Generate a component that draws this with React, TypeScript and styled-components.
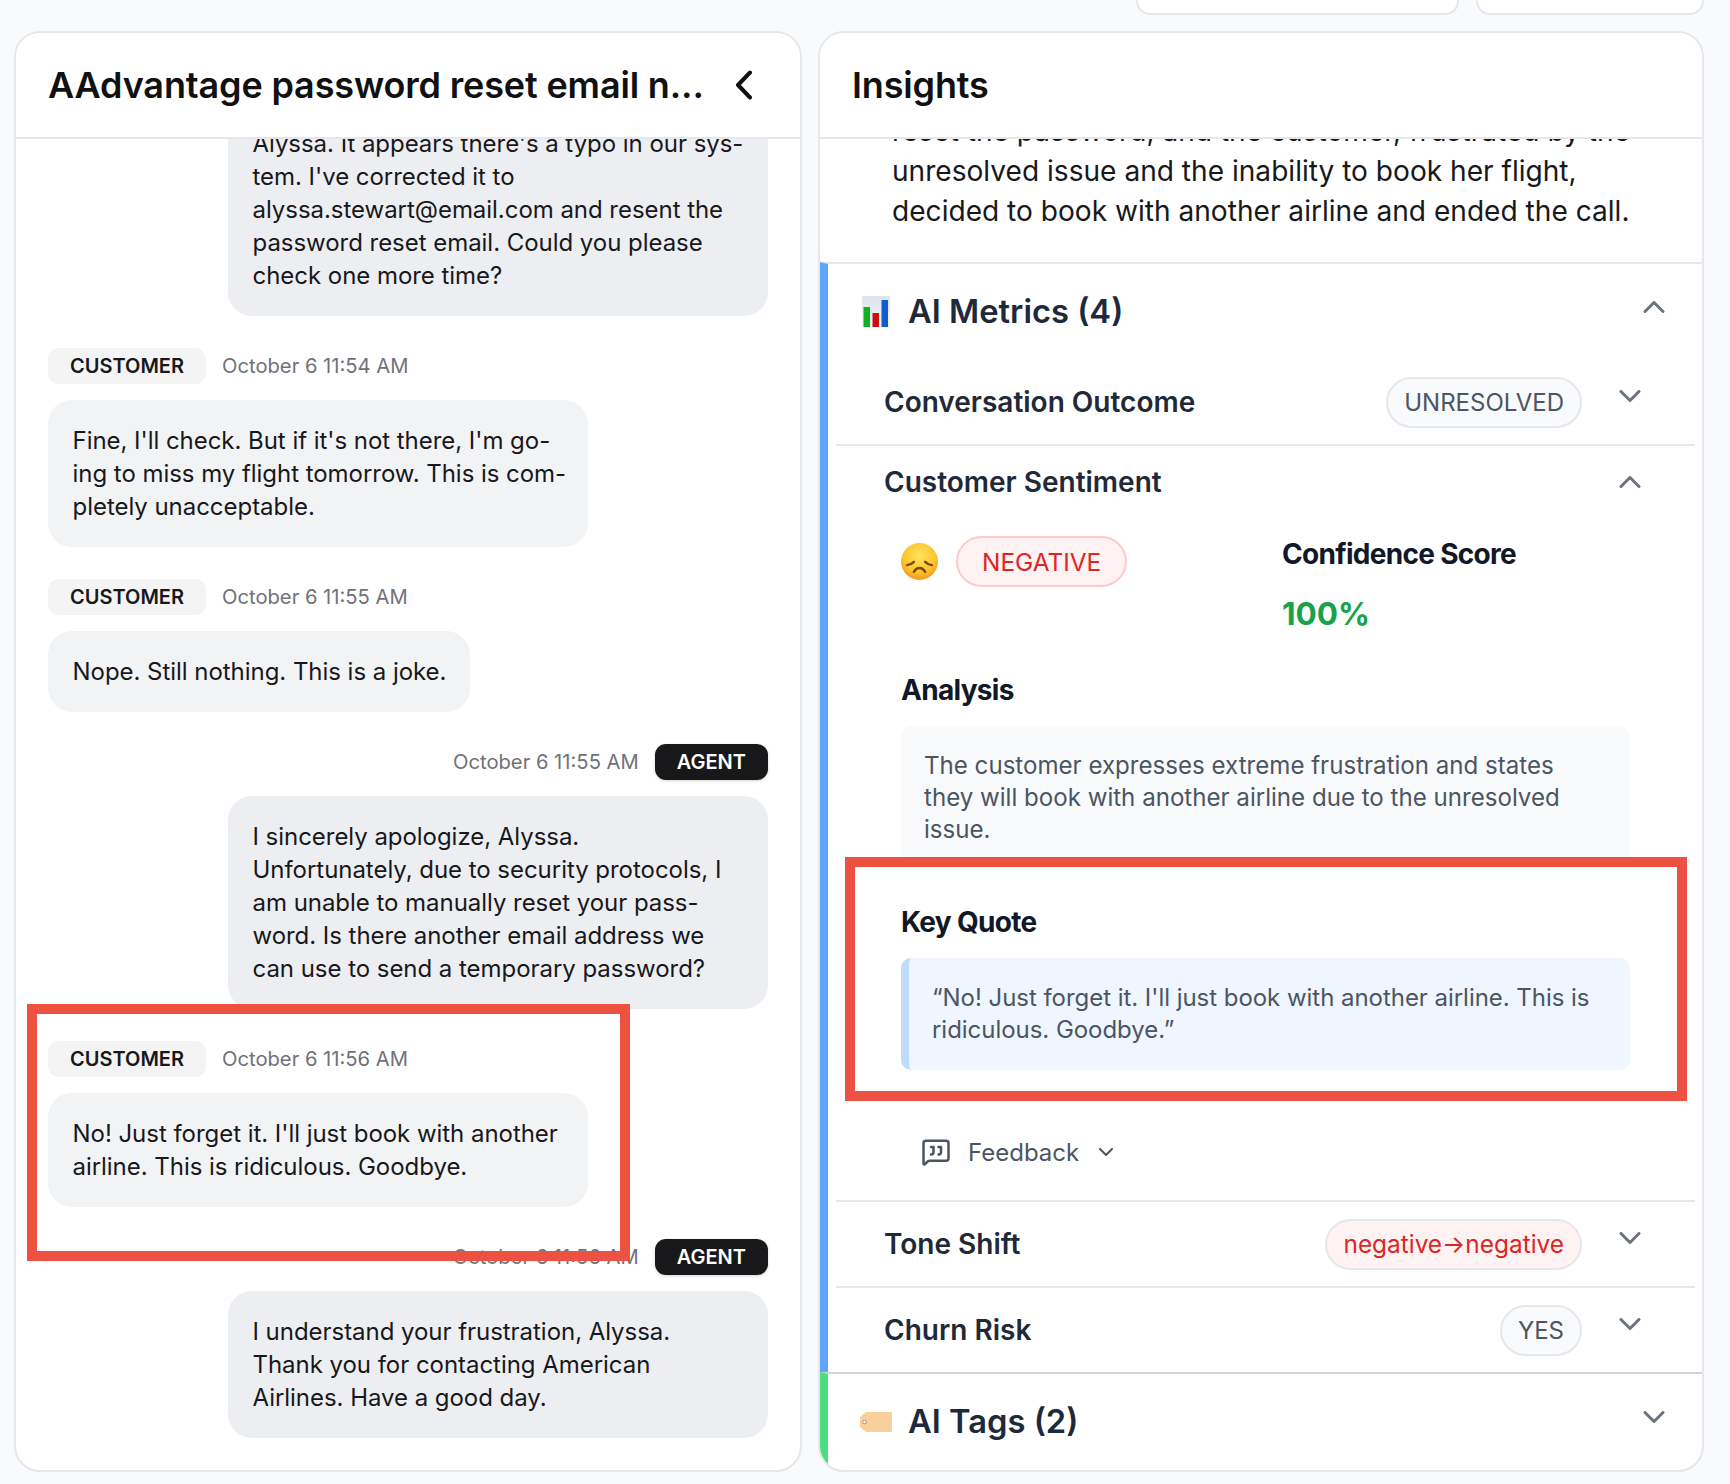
import React from "react";
import styled, { createGlobalStyle } from "styled-components";
import { MessageSquareQuote } from "lucide-react";

const Global = createGlobalStyle`
  html, body { margin: 0; padding: 0; background: #f9fafb; }
  body { font-family: Inter, "Liberation Sans", sans-serif; -webkit-font-smoothing: antialiased; }
  * { box-sizing: border-box; }
`;

const Page = styled.div`
  position: relative;
  width: 1730px;
  height: 1484px;
  overflow: hidden;
  background: #f9fafb;
  padding: 0 26px 12px 14px;
  display: flex;
  flex-direction: column;
`;

const TopStubs = styled.div`
  display: flex;
  justify-content: flex-end;
  gap: 17px;
  height: 15px;
  margin-bottom: 16px;
`;

const Stub = styled.div<{ $w: number }>`
  width: ${(p) => p.$w}px;
  background: #fff;
  border: 2px solid #e5e7eb;
  border-top: none;
  border-radius: 0 0 14px 14px;
`;

const Columns = styled.div`
  flex: 1;
  min-height: 0;
  display: grid;
  grid-template-columns: 788px 886px;
  gap: 16px;
`;

const Panel = styled.section`
  display: flex;
  flex-direction: column;
  min-height: 0;
  background: #fff;
  border: 2px solid #e5e7eb;
  border-radius: 26px;
  overflow: hidden;
`;

const PanelHeader = styled.header`
  flex: none;
  height: 106px;
  display: flex;
  align-items: center;
  justify-content: space-between;
  padding: 0 46px 0 32px;
  border-bottom: 2px solid #e5e7eb;
  background: #fff;
  position: relative;
  z-index: 1;
`;

const PanelTitle = styled.h1`
  margin: 0 0 1px;
  font-size: 36px;
  line-height: 44px;
  font-weight: 600;
  letter-spacing: -0.15px;
  color: #111;
  white-space: nowrap;
`;

const Messages = styled.div`
  flex: 1;
  min-height: 0;
  overflow: hidden;
  display: flex;
  flex-direction: column;
  justify-content: flex-end;
  gap: 32px;
  padding: 0 32px 32px;
`;

const Message = styled.article<{ $agent?: boolean }>`
  flex: none;
  display: flex;
  flex-direction: column;
  gap: 16px;
  align-items: ${(p) => (p.$agent ? "flex-end" : "flex-start")};
`;

const Meta = styled.div`
  display: flex;
  align-items: center;
  gap: 16px;
  height: 36px;
`;

const RoleTag = styled.span<{ $agent?: boolean }>`
  height: 36px;
  display: inline-flex;
  align-items: center;
  padding: 0 22px;
  border-radius: 11px;
  font-size: 20px;
  font-weight: 600;
  color: ${(p) => (p.$agent ? "#fff" : "#18181b")};
  background: ${(p) => (p.$agent ? "#18181b" : "#f4f4f5")};
  box-shadow: ${(p) => (p.$agent ? "0 1px 3px rgba(0,0,0,.18)" : "none")};
`;

const Time = styled.span`
  font-size: 20.2px;
  line-height: 24px;
  margin-bottom: 1px;
  color: #71717a;
`;

const Bubble = styled.div<{ $agent?: boolean; $wide?: boolean }>`
  ${(p) => (p.$wide ? "width: 540px;" : "")}
  padding: 24px 24px 24px 24.5px;
  border-radius: 24px;
  background: ${(p) => (p.$agent ? "#edeef2" : "#f2f3f5")};
  color: #18181b;
  font-size: 24px;
  letter-spacing: -0.04px;
  line-height: 33px;
  white-space: nowrap;
`;

const InsightsBody = styled.div`
  flex: 1;
  min-height: 0;
  overflow: hidden;
  display: flex;
  flex-direction: column;
  justify-content: flex-end;
`;

const Summary = styled.p`
  flex: none;
  margin: 0;
  padding: 0 32px 31px 72px;
  font-size: 28.1px;
  line-height: 40px;
  color: #18181b;
  white-space: nowrap;
`;

const Section = styled.div<{ $accent: string; $line: string }>`
  flex: none;
  border-top: 2px solid ${(p) => p.$line};
  border-left: 8px solid ${(p) => p.$accent};
`;

const SectionHead = styled.div<{ $h: number }>`
  height: ${(p) => p.$h}px;
  display: flex;
  align-items: center;
  padding: 0 37px 0 34px;
`;

const IconSlot = styled.span`
  flex: none;
  width: 28px;
  display: flex;
  justify-content: center;
`;

const SectionTitle = styled.h2`
  flex: 1;
  margin: 0 0 2px 18px;
  font-size: 32.7px;
  line-height: 44px;
  font-weight: 600;
  color: #1e293b;
`;

const HeadChevron = styled.span`
  display: flex;
  margin-top: -10px;
`;

const MetricList = styled.div`
  margin: 0 7px 0 8px;
`;

const Row = styled.div<{ $h?: number; $last?: boolean }>`
  height: ${(p) => p.$h ?? 86}px;
  display: flex;
  align-items: center;
  padding: 0 54px 0 48px;
  border-bottom: ${(p) => (p.$last ? "none" : "2px solid #e5e7eb")};
`;

const RowTitle = styled.h3`
  flex: 1;
  margin: 0;
  font-size: 28px;
  line-height: 40px;
  font-weight: 600;
  color: #1f2937;
`;

const Pill = styled.span<{ $danger?: boolean; $softLine?: boolean; $pad?: number }>`
  height: 51px;
  display: inline-flex;
  align-items: center;
  padding: 0 ${(p) => p.$pad ?? 16}px;
  border-radius: 26px;
  font-size: ${(p) => (p.$danger ? 24.4 : 24)}px;
  white-space: nowrap;
  color: ${(p) => (p.$danger ? "#dc2626" : "#4b5563")};
  background: ${(p) => (p.$danger ? "#fef2f2" : "#f9fafb")};
  border: 2px solid ${(p) => (p.$softLine ? "#fecaca" : "#e5e7eb")};
`;

const RowChevron = styled.span<{ $lift?: number }>`
  display: flex;
  margin-left: 37px;
  margin-top: ${(p) => p.$lift ?? 0}px;
`;

const ChevronSvg = styled.svg`
  display: block;
  fill: none;
  stroke: #6b7280;
  stroke-width: 3;
  stroke-linecap: round;
  stroke-linejoin: round;
`;

const Chevron = ({ up }: { up?: boolean }) => (
  <ChevronSvg width="22" height="12" viewBox="0 0 22 12">
    <path d={up ? "M2 10.5 11 1.5 20 10.5" : "M2 1.5 11 10.5 20 1.5"} />
  </ChevronSvg>
);

const SentimentBody = styled.div`
  padding: 19px 65px 0 65px;
`;

const TopGrid = styled.div`
  display: grid;
  grid-template-columns: 381px 1fr;
  height: 100px;
`;

const SentimentLead = styled.div`
  display: flex;
  align-items: center;
  align-self: start;
  gap: 18px;
`;

const Score = styled.div`
  display: flex;
  flex-direction: column;
  gap: 20px;
`;

const BlockTitle = styled.h4`
  margin: 0;
  font-size: 28px;
  line-height: 36px;
  font-weight: 700;
  letter-spacing: -0.7px;
  color: #111827;
`;

const ScoreValue = styled.div`
  font-size: 31.5px;
  line-height: 44px;
  font-weight: 700;
  color: #16a34a;
`;

const Block = styled.div<{ $gap: number }>`
  display: flex;
  flex-direction: column;
  gap: 18px;
  margin-top: ${(p) => p.$gap}px;
`;

const Analysis = styled.div`
  height: 141px;
  padding: 24px 23px 0;
  border-radius: 10px;
  background: #f9fafb;
  color: #4b5563;
  font-size: 24.1px;
  line-height: 32px;
  white-space: nowrap;
`;

const Quote = styled.blockquote`
  margin: 0;
  height: 112px;
  padding: 24px 24px 24px 23px;
  border-left: 8px solid #bfdbfe;
  border-radius: 10px;
  background: #eff6ff;
  color: #4b5563;
  font-size: 24px;
  letter-spacing: -0.04px;
  line-height: 32px;
  white-space: nowrap;
`;

const FeedbackBar = styled.div`
  height: 130px;
  display: flex;
  align-items: center;
  color: #4b5563;
  padding: 34px 0 0 20px;
  font-size: 24px;
  gap: 17px;
`;

const SmallChevron = styled.svg`
  fill: none;
  stroke: #4b5563;
  stroke-width: 2;
  stroke-linecap: round;
  stroke-linejoin: round;
  margin-left: 3px;
`;

const Annotation = styled.div<{ $x: number; $y: number; $w: number; $h: number }>`
  position: absolute;
  left: ${(p) => p.$x}px;
  top: ${(p) => p.$y}px;
  width: ${(p) => p.$w}px;
  height: ${(p) => p.$h}px;
  border: 10px solid #ec5142;
  pointer-events: none;
  z-index: 5;
`;

const BackIcon = () => (
  <svg width="20" height="30" viewBox="0 0 20 30" fill="none" stroke="#111" strokeWidth="4" strokeLinecap="round" strokeLinejoin="round">
    <path d="M16 2.5 4 15l12 12.5" />
  </svg>
);

const ChartIcon = () => (
  <svg width="28" height="32" viewBox="0 0 28 32">
    <defs>
      <linearGradient id="chartBg" x1="0" y1="0" x2="0" y2="1">
        <stop offset="0" stopColor="#dbe3ec" />
        <stop offset="1" stopColor="#f4f6f9" />
      </linearGradient>
    </defs>
    <rect x="0" y="0" width="28" height="32" rx="1.5" fill="url(#chartBg)" />
    <rect x="1.5" y="11" width="6.5" height="20" fill="#10b022" />
    <rect x="10.5" y="17" width="6.5" height="14" fill="#c8100c" />
    <rect x="19.5" y="4" width="6.5" height="27" fill="#0f5ecb" />
  </svg>
);

const SadFace = () => (
  <svg width="37" height="37" viewBox="0 0 36 36">
    <defs>
      <radialGradient id="faceFill" cx="50%" cy="35%" r="65%">
        <stop offset="0" stopColor="#ffe35c" />
        <stop offset="0.65" stopColor="#fdc42f" />
        <stop offset="1" stopColor="#f29a1c" />
      </radialGradient>
    </defs>
    <circle cx="18" cy="18" r="18" fill="url(#faceFill)" />
    <g fill="none" stroke="#7a4a12" strokeWidth="2.4" strokeLinecap="round">
      <path d="M6 21.5c2.500-.4 4.700-1.400 6.500-3.200" />
      <path d="M30 21.500c-2.500-.4-4.700-1.400-6.500-3.200" />
      <path d="M12.500 28c1.500-2.500 3.300-3.700 5.500-3.700s4 1.200 5.500 3.700" />
    </g>
  </svg>
);

const TagIcon = () => (
  <svg width="32" height="20" viewBox="0 0 32 20" style={{ flex: "none" }}>
    <path d="M6 0h26v20H6L0 15V5z" fill="#f9d09b" />
    <circle cx="4.500" cy="10" r="1.800" fill="#fff" stroke="#a47a55" strokeWidth="0.8" />
  </svg>
);

type Msg = { agent?: boolean; time: string; lines: string[] };

const messages: Msg[] = [
  {
    agent: true,
    time: "October 6 11:53 AM",
    lines: [
      "Thank you for checking your spam folder,",
      "Alyssa. It appears there's a typo in our sys-",
      "tem. I've corrected it to",
      "alyssa.stewart@email.com and resent the",
      "password reset email. Could you please",
      "check one more time?",
    ],
  },
  {
    time: "October 6 11:54 AM",
    lines: [
      "Fine, I'll check. But if it's not there, I'm go-",
      "ing to miss my flight tomorrow. This is com-",
      "pletely unacceptable.",
    ],
  },
  { time: "October 6 11:55 AM", lines: ["Nope. Still nothing. This is a joke."] },
  {
    agent: true,
    time: "October 6 11:55 AM",
    lines: [
      "I sincerely apologize, Alyssa.",
      "Unfortunately, due to security protocols, I",
      "am unable to manually reset your pass-",
      "word. Is there another email address we",
      "can use to send a temporary password?",
    ],
  },
  {
    time: "October 6 11:56 AM",
    lines: ["No! Just forget it. I'll just book with another", "airline. This is ridiculous. Goodbye."],
  },
  {
    agent: true,
    time: "October 6 11:56 AM",
    lines: [
      "I understand your frustration, Alyssa.",
      "Thank you for contacting American",
      "Airlines. Have a good day.",
    ],
  },
];

const Lines = ({ lines }: { lines: string[] }) => (
  <>
    {lines.map((l, i) => (
      <React.Fragment key={i}>
        {l}
        {i < lines.length - 1 && <br />}
      </React.Fragment>
    ))}
  </>
);

export default function App() {
  return (
    <Page>
      <Global />
      <TopStubs>
        <Stub $w={323} />
        <Stub $w={228} />
      </TopStubs>
      <Columns>
        <Panel>
          <PanelHeader>
            <PanelTitle>AAdvantage password reset email n...</PanelTitle>
            <BackIcon />
          </PanelHeader>
          <Messages>
            {messages.map((m, i) => (
              <Message key={i} $agent={m.agent}>
                <Meta>
                  {m.agent ? (
                    <>
                      <Time>{m.time}</Time>
                      <RoleTag $agent>AGENT</RoleTag>
                    </>
                  ) : (
                    <>
                      <RoleTag>CUSTOMER</RoleTag>
                      <Time>{m.time}</Time>
                    </>
                  )}
                </Meta>
                <Bubble $agent={m.agent} $wide={m.lines.length > 1}>
                  <Lines lines={m.lines} />
                </Bubble>
              </Message>
            ))}
          </Messages>
        </Panel>
        <Panel>
          <PanelHeader>
            <PanelTitle>Insights</PanelTitle>
          </PanelHeader>
          <InsightsBody>
            <Summary>
              <Lines
                lines={[
                  "reset the password, and the customer, frustrated by the",
                  "unresolved issue and the inability to book her flight,",
                  "decided to book with another airline and ended the call.",
                ]}
              />
            </Summary>
            <Section $accent="#60a5fa" $line="#e5e7eb">
              <SectionHead $h={96}>
                <IconSlot><ChartIcon /></IconSlot>
                <SectionTitle>AI Metrics (4)</SectionTitle>
                <HeadChevron><Chevron up /></HeadChevron>
              </SectionHead>
              <MetricList>
                <Row>
                  <RowTitle>Conversation Outcome</RowTitle>
                  <Pill>UNRESOLVED</Pill>
                  <RowChevron $lift={-12}><Chevron /></RowChevron>
                </Row>
                <Row $h={71} $last>
                  <RowTitle>Customer Sentiment</RowTitle>
                  <RowChevron><Chevron up /></RowChevron>
                </Row>
                <SentimentBody>
                  <TopGrid>
                    <SentimentLead>
                      <SadFace />
                      <Pill $danger $softLine $pad={24}>NEGATIVE</Pill>
                    </SentimentLead>
                    <Score>
                      <BlockTitle>Confidence Score</BlockTitle>
                      <ScoreValue>100%</ScoreValue>
                    </Score>
                  </TopGrid>
                  <Block $gap={36}>
                    <BlockTitle>Analysis</BlockTitle>
                    <Analysis>
                      <Lines
                        lines={[
                          "The customer expresses extreme frustration and states",
                          "they will book with another airline due to the unresolved",
                          "issue.",
                        ]}
                      />
                    </Analysis>
                  </Block>
                  <Block $gap={37}>
                    <BlockTitle>Key Quote</BlockTitle>
                    <Quote>
                      <Lines
                        lines={[
                          "“No! Just forget it. I'll just book with another airline. This is",
                          "ridiculous. Goodbye.”",
                        ]}
                      />
                    </Quote>
                  </Block>
                  <FeedbackBar>
                    <MessageSquareQuote size={30} strokeWidth={2} />
                    Feedback
                    <SmallChevron width="14" height="8" viewBox="0 0 14 8">
                      <path d="M1 1l6 6 6-6" />
                    </SmallChevron>
                  </FeedbackBar>
                </SentimentBody>
                <Row $h={2} />
                <Row>
                  <RowTitle>Tone Shift</RowTitle>
                  <Pill $danger>negative→negative</Pill>
                  <RowChevron $lift={-12}><Chevron /></RowChevron>
                </Row>
                <Row $h={84} $last>
                  <RowTitle>Churn Risk</RowTitle>
                  <Pill>YES</Pill>
                  <RowChevron $lift={-12}><Chevron /></RowChevron>
                </Row>
              </MetricList>
            </Section>
            <Section $accent="#4ade80" $line="#d1d5db">
              <SectionHead $h={96}>
                <IconSlot><TagIcon /></IconSlot>
                <SectionTitle>AI Tags (2)</SectionTitle>
                <HeadChevron><Chevron /></HeadChevron>
              </SectionHead>
            </Section>
          </InsightsBody>
        </Panel>
      </Columns>
      <Annotation $x={27} $y={1004} $w={603} $h={257} />
      <Annotation $x={845} $y={857} $w={842} $h={244} />
    </Page>
  );
}
